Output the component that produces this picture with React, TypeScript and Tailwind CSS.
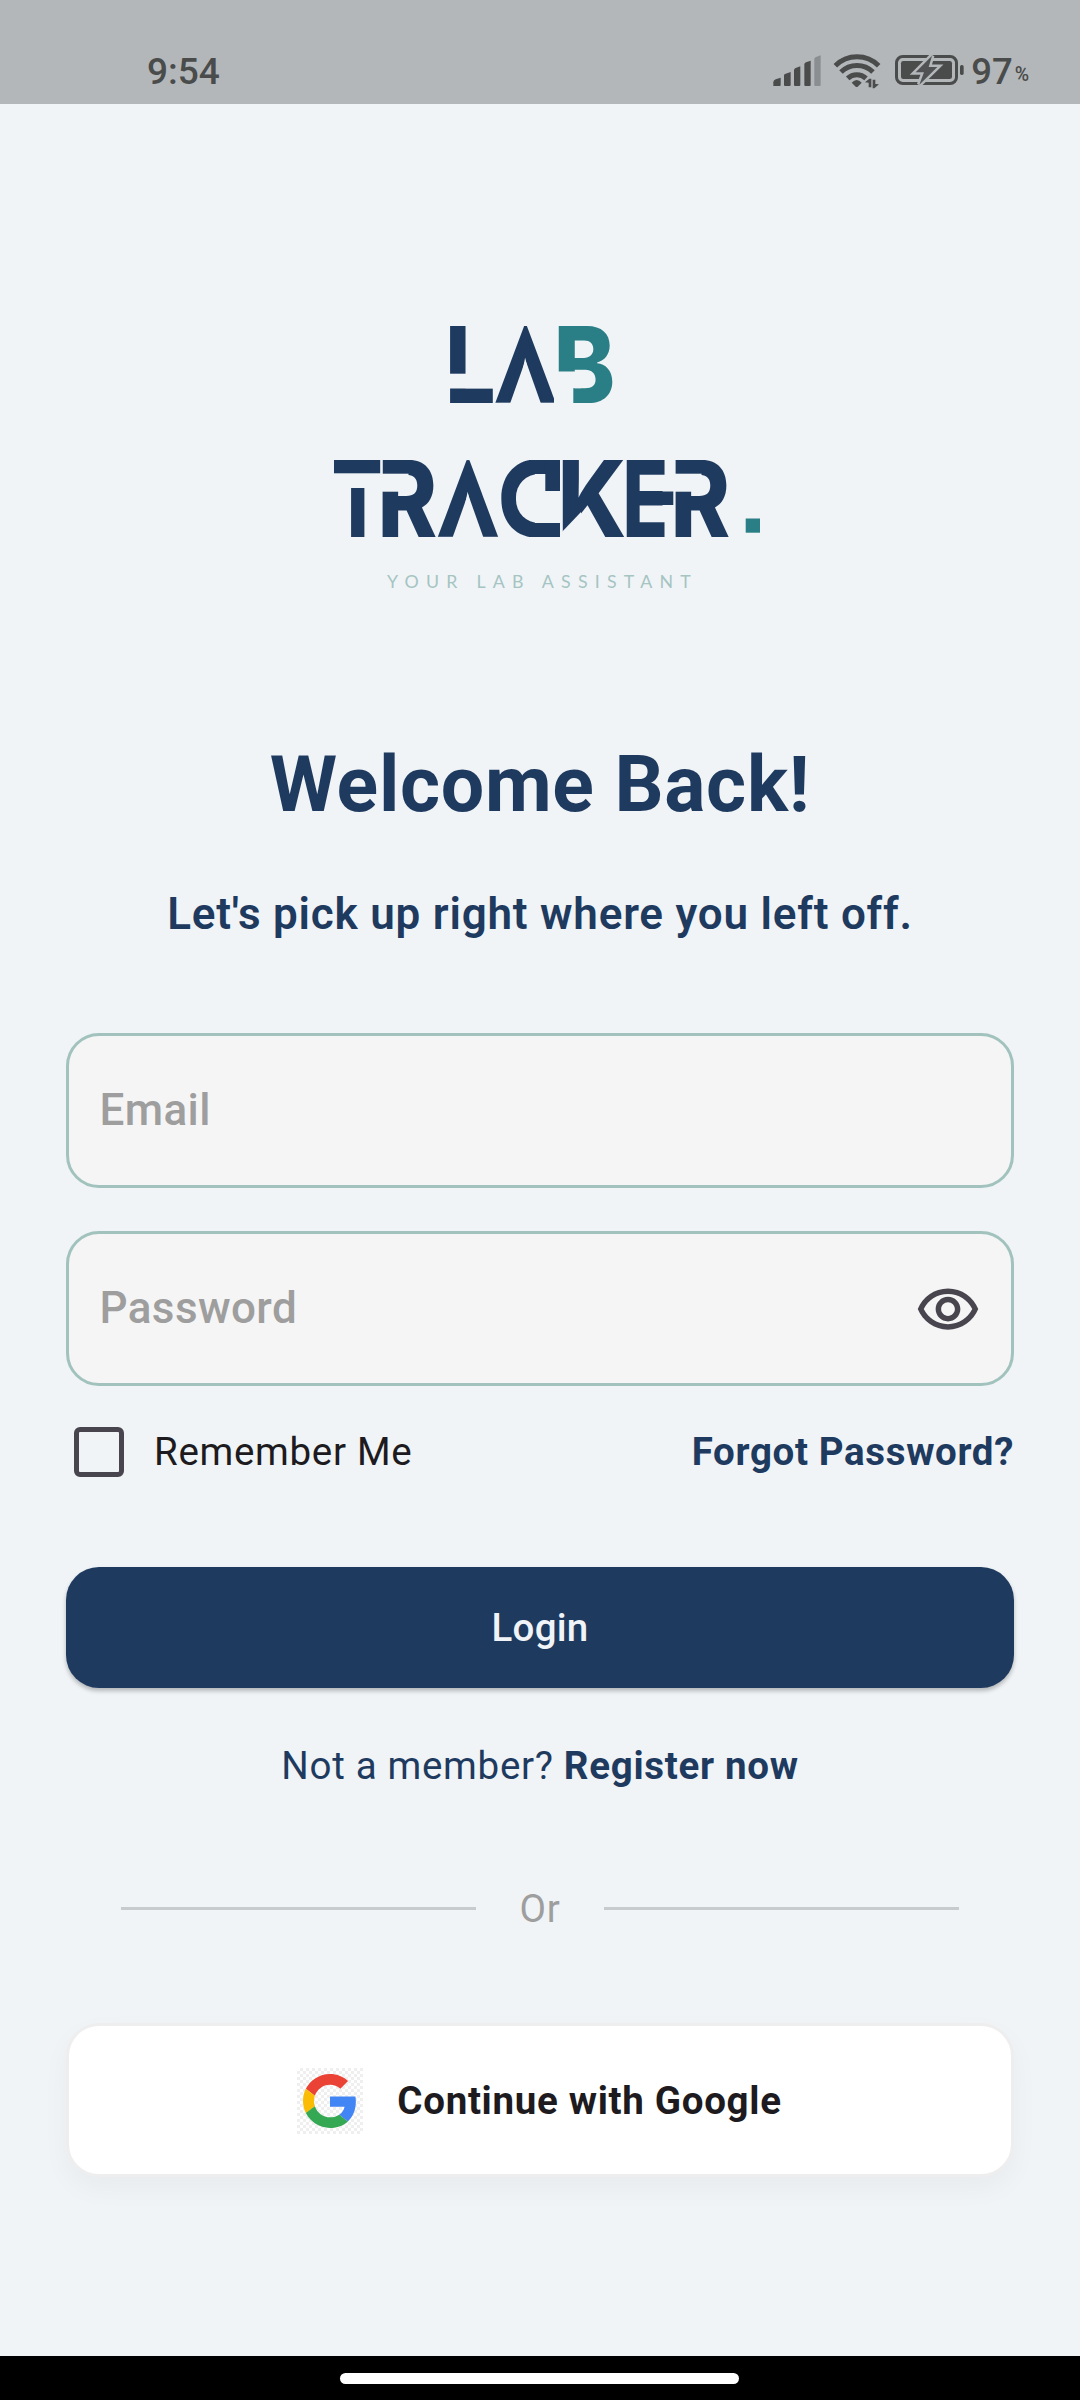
import React, { useState } from "react";

const NAVY = "#1f3a5f";
const TEAL = "#2a7f86";
const PAGE = "#f0f4f7";

/** One bold glyph of the wordmark, narrowed horizontally. */
function Glyph({ ch, x, y, sx, fill = NAVY }: { ch: string; x: number; y: number; sx: number; fill?: string }) {
  return (
    <text
      transform={`translate(${x} ${y}) scale(${sx} 1)`}
      fontFamily="Inter, sans-serif"
      fontWeight={800}
      fontSize={105.5}
      fill={fill}
    >
      {ch}
    </text>
  );
}

/** Letter A whose crossbar and shoulders are trimmed to a sharp peak. */
function PeakA({ left, y }: { left: number; y: number }) {
  return (
    <g>
      <text
        transform={`translate(${left + 30} ${y}) scale(0.8 1)`}
        textAnchor="middle"
        fontFamily="Inter, sans-serif"
        fontWeight={800}
        fontSize={105.5}
        fill={NAVY}
        stroke={NAVY}
        strokeWidth={8}
      >
        A
      </text>
      <g transform={`translate(${left} ${y - 76.7})`} fill={PAGE}>
        <polygon points="30,34 14.4,78 45.6,78" />
        <polygon points="28.6,-8 28.6,0 -0.6,78 -12,78 -12,-8" />
        <polygon points="31.4,-8 31.4,0 60.6,78 72,78 72,-8" />
        <rect x="-12" y="-10" width="84" height="10" />
        <rect x="-12" y="76.7" width="84" height="10" />
      </g>
    </g>
  );
}

function Logo() {
  return (
    <svg className="mx-auto mt-[206px] block h-[290px] w-[440px] shrink-0" viewBox="320 310 440 290" aria-label="Lab Tracker">
      <PeakA left={495.5} y={402.7} />
      <Glyph ch="L" x={445} y={402.7} sx={0.85} />
      <rect x="446" y="373.7" width="49" height="14.8" fill={PAGE} />
      <Glyph ch="B" x={553.5} y={402.7} sx={0.88} fill={TEAL} />
      <rect x="554" y="371.5" width="19.3" height="33" fill={PAGE} />
      <rect x="573" y="371.5" width="8" height="16.7" fill={PAGE} />

      <PeakA left={438} y={536.8} />
      <Glyph ch="T" x={331.5} y={536.8} sx={0.735} />
      <rect x="330" y="473.3" width="51" height="14.7" fill={PAGE} />
      <Glyph ch="R" x={377.6} y={536.8} sx={0.855} />
      <rect x="381.5" y="473.7" width="27" height="18" fill={PAGE} />
      <rect x="380.2" y="456" width="2.2" height="20" fill={PAGE} />
      <Glyph ch="C" x={497} y={536.8} sx={1.02} />
      <g fill={PAGE}>
        <rect x="535" y="455" width="45" height="85" />
        <rect x="516" y="474" width="50" height="49" rx="23" />
        <rect x="500" y="455" width="60" height="5" />
        <rect x="500" y="537" width="60" height="5" />
      </g>
      <g fill={NAVY}>
        <rect x="534" y="460" width="26" height="14" />
        <rect x="545.3" y="460" width="14.7" height="31" />
        <rect x="534" y="523" width="26" height="14" />
      </g>
      <Glyph ch="K" x={557.4} y={536.8} sx={0.885} />
      <polygon points="560,534 581,512 581,538 560,538" fill={PAGE} />
      <Glyph ch="E" x={622.5} y={536.8} sx={0.71} />
      <rect x="642" y="491.5" width="31.3" height="13.5" fill={NAVY} />
      <Glyph ch="R" x={670.6} y={536.8} sx={0.855} />
      <rect x="674.5" y="473.7" width="27" height="18" fill={PAGE} />

      <rect x="745.7" y="518.5" width="14.3" height="14.2" fill={TEAL} />
      <text x="387" y="587.8" fontFamily="Lato, sans-serif" fontSize="17.8" letterSpacing="7.2" fill="#a5c4c2">
        YOUR LAB ASSISTANT
      </text>
    </svg>
  );
}

function StatusIcons() {
  return (
    <svg className="block h-[74px] w-[200px]" viewBox="54 0 600 222" fill="#4a4b4b">
      <path d="M73 168V157Q73 151 80 148L95 143V165Q95 168 92 168Z" />
      <path d="M105 135Q106 132 110 131L125 126V165Q125 168 122 168H108Q105 168 105 165Z" />
      <path d="M135 119Q136 116 140 114L154 109V165Q154 168 151 168H138Q135 168 135 165Z" />
      <path d="M166 102Q167 99 171 97L185 92V165Q185 168 182 168H169Q166 168 166 165Z" />
      <path d="M196 86Q197 83 201 81L215 76V165Q215 168 212 168H199Q196 168 196 165Z" fill="#8b8e90" />
      <g fill="none" stroke="#4a4b4b" strokeWidth="15">
        <path d="M259 107A92 92 0 0 1 389 107" />
        <path d="M276 126A68 68 0 0 1 372 126" />
        <path d="M296 145A40 40 0 0 1 351 145" />
      </g>
      <path d="M308 158Q323 142 338 158L326 170Q323 172 320 170Z" />
      <path d="M348 157L361 146H367V172H359V158ZM390 163L376 175H371V149H379V162Z" />
      <rect x="442.5" y="79.5" width="180" height="81" rx="19" fill="none" stroke="#4a4b4b" strokeWidth="9" />
      <rect x="456" y="93" width="153" height="54" rx="7" />
      <rect x="633" y="105" width="11" height="30" rx="5" />
      <polygon
        points="549,77 500,127 525,127 511,164 565,111 539,111"
        fill="#505253"
        stroke="#b3b7ba"
        strokeWidth="15"
        paintOrder="stroke"
        strokeLinejoin="miter"
      />
    </svg>
  );
}

function GoogleLogo() {
  return (
    <div className="flex size-[66px] items-center justify-center bg-[repeating-conic-gradient(#efefef_0%_25%,#ffffff_0%_50%)] bg-[length:6px_6px]">
      <svg className="size-[54px]" viewBox="0 0 48 48">
        <path fill="#ea4335" d="M24 9.5c3.54 0 6.71 1.22 9.21 3.6l6.85-6.85C35.9 2.38 30.47 0 24 0 14.62 0 6.51 5.38 2.56 13.22l7.98 6.19C12.43 13.72 17.74 9.5 24 9.5z" />
        <path fill="#4285f4" d="M46.98 24.55c0-1.57-.15-3.09-.38-4.55H24v9.02h12.94c-.58 2.96-2.26 5.48-4.78 7.18l7.73 6c4.51-4.18 7.09-10.36 7.09-17.65z" />
        <path fill="#fbbc05" d="M10.53 28.59c-.48-1.45-.76-2.99-.76-4.59s.27-3.14.76-4.59l-7.98-6.19C.92 16.46 0 20.12 0 24c0 3.88.92 7.54 2.56 10.78l7.97-6.19z" />
        <path fill="#34a853" d="M24 48c6.48 0 11.93-2.13 15.89-5.81l-7.73-6c-2.15 1.45-4.92 2.3-8.16 2.3-6.26 0-11.57-4.22-13.47-9.91l-7.98 6.19C6.51 42.62 14.62 48 24 48z" />
      </svg>
    </div>
  );
}

const FIELD =
  "flex h-[155px] items-center rounded-[33px] border-[3px] border-[#a1c2bd] bg-[#f5f5f5] pr-[30px] pl-[30.5px]";
const INPUT =
  "mb-[2px] min-w-0 flex-1 bg-transparent text-[44px] leading-[60px] font-medium tracking-[0.4px] outline-none placeholder:text-[#9e9e9e] placeholder:opacity-100";

export default function App() {
  const [visible, setVisible] = useState(false);
  return (
    <div className="flex h-[2400px] w-[1080px] flex-col overflow-hidden bg-[#f0f4f7] font-['Roboto',sans-serif] text-[#1f3a5f]">
      <header className="flex h-[104px] shrink-0 bg-[#b3b7ba] pt-[30px] pr-[51px] pl-[147px] text-[#4a4b4b]">
        <span className="mt-[21px] text-[37px] leading-[42px] font-medium">9:54</span>
        <div className="ml-auto flex">
          <StatusIcons />
          <span className="mt-[21px] ml-[4px] text-[36.5px] leading-[42px] font-medium">97</span>
          <span className="mt-[30px] ml-[2px] text-[19.5px] leading-[30px] font-medium">%</span>
        </div>
      </header>

      <main className="flex flex-1 flex-col px-[66px]">
        <Logo />

        <h1 className="mt-[140px] text-center text-[77px] leading-[90px] font-bold tracking-[0.69px]">
          Welcome Back!
        </h1>
        <p className="mt-[58px] text-center text-[44px] leading-[52px] font-semibold tracking-[0.78px]">
          Let's pick up right where you left off.
        </p>

        <div className="mt-[93px] flex flex-col gap-[43px]">
          <label className={FIELD}>
            <input className={INPUT} type="email" placeholder="Email" />
          </label>
          <label className={FIELD}>
            <input className={INPUT} type={visible ? "text" : "password"} placeholder="Password" />
            <button type="button" onClick={() => setVisible(!visible)} aria-label="Show password">
              <svg className="block size-[66px]" viewBox="0 0 24 24" fill="#49454f">
                <g transform="translate(0 .5)">
                  <path d="M12 6c3.79 0 7.17 2.13 8.82 5.5C19.17 14.87 15.79 17 12 17s-7.17-2.13-8.82-5.5C4.83 8.13 8.21 6 12 6m0-2C7 4 2.73 7.11 1 11.5 2.73 15.89 7 19 12 19s9.27-3.11 11-7.5C21.27 7.11 17 4 12 4zm0 5c1.38 0 2.5 1.12 2.5 2.5S13.38 14 12 14s-2.5-1.12-2.5-2.5S10.62 9 12 9m0-2c-2.48 0-4.5 2.02-4.5 4.5S9.52 16 12 16s4.5-2.02 4.5-4.5S14.48 7 12 7z" />
                </g>
              </svg>
            </button>
          </label>
        </div>

        <div className="mt-[41px] flex h-[50px] items-center">
          <span className="ml-[8px] size-[50px] rounded-[6px] border-[5.5px] border-[#49454f]" />
          <span className="ml-[30px] text-[38.5px] leading-[46px] tracking-[0.69px] text-[#1d1b20]">
            Remember Me
          </span>
          <a className="ml-auto text-[38.5px] leading-[46px] font-bold tracking-[0.65px]">Forgot Password?</a>
        </div>

        <button
          type="button"
          className="mt-[90px] h-[121px] rounded-[33px] bg-[#1f3a5f] text-[38.5px] leading-[46px] font-medium tracking-[0.3px] text-[#f0f4f8] shadow-[0_3px_4px_rgba(0,0,0,0.25)]"
        >
          Login
        </button>

        <p className="mt-[55px] text-center text-[38.5px] leading-[46px] tracking-[0.69px]">
          Not a member? <b className="font-bold">Register now</b>
        </p>

        <div className="mt-[96px] flex h-[46px] items-center px-[55px]">
          <span className="h-[3px] flex-1 bg-[#c8cbcd]" />
          <span className="w-[128px] pt-[2px] text-center text-[38.5px] leading-[46px] tracking-[0.69px] text-[#9e9e9e]">
            Or
          </span>
          <span className="h-[3px] flex-1 bg-[#c8cbcd]" />
        </div>

        <button
          type="button"
          className="mt-[92px] flex h-[154px] items-center justify-center rounded-[33px] border-[3px] border-[#eeeeee] bg-white pt-[2px] pr-[1px] shadow-[0_11px_28px_rgba(0,0,0,0.04)]"
        >
          <GoogleLogo />
          <span className="ml-[34px] text-[38.5px] leading-[46px] font-bold tracking-[0.69px] text-[#1d1b20]">
            Continue with Google
          </span>
        </button>
      </main>

      <footer className="h-[44px] shrink-0 bg-black pt-[17px] pl-[340px]">
        <div className="h-[11px] w-[399px] rounded-full bg-white" />
      </footer>
    </div>
  );
}
